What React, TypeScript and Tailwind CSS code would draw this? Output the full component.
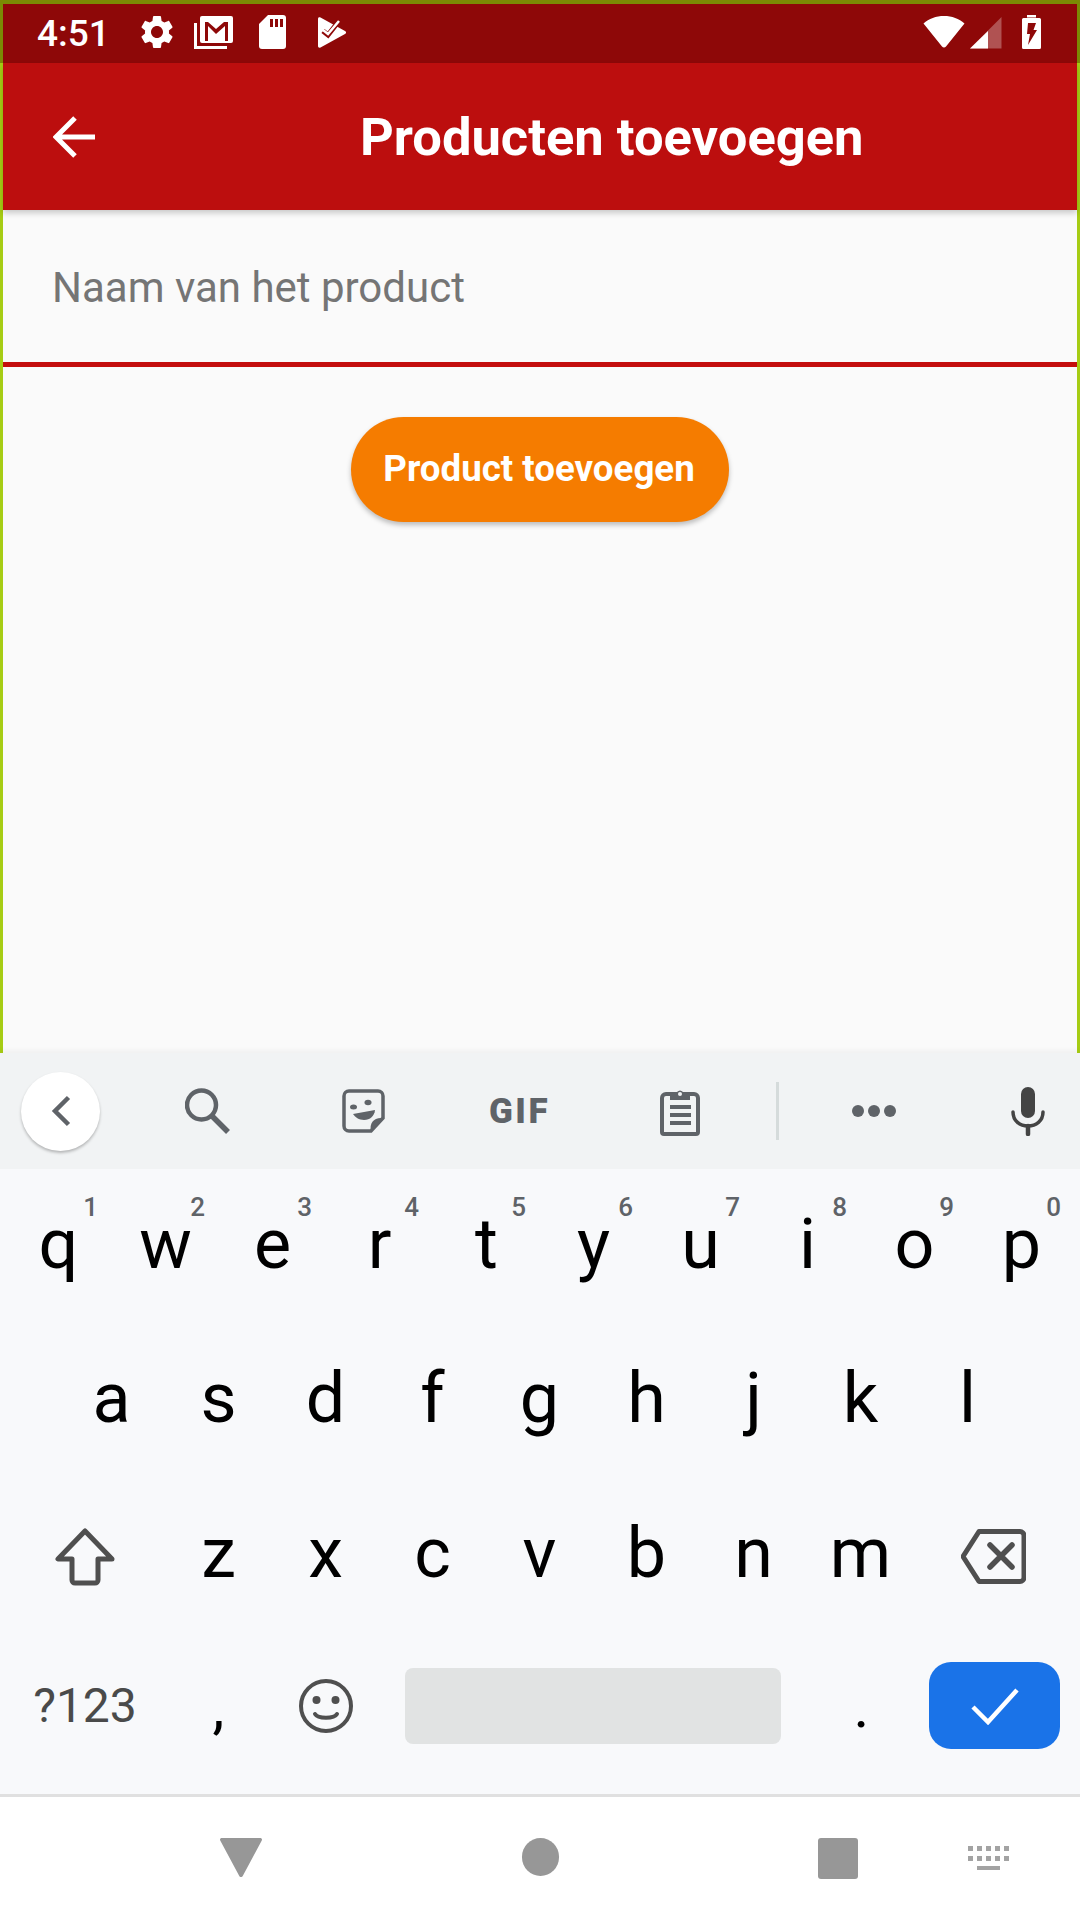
const ROW1 = [
  ["q", "1"], ["w", "2"], ["e", "3"], ["r", "4"], ["t", "5"],
  ["y", "6"], ["u", "7"], ["i", "8"], ["o", "9"], ["p", "0"],
];
const ROW2 = ["a", "s", "d", "f", "g", "h", "j", "k", "l"];
const ROW3 = ["z", "x", "c", "v", "b", "n", "m"];

const GEAR =
  "M19.14 12.94c.04-.3.06-.61.06-.94 0-.32-.02-.64-.07-.94l2.03-1.58c.18-.14.23-.41.12-.61l-1.92-3.32c-.12-.22-.37-.29-.59-.22l-2.39.96c-.5-.38-1.03-.7-1.62-.94l-.36-2.54c-.04-.24-.24-.41-.48-.41h-3.84c-.24 0-.43.17-.47.41l-.36 2.54c-.59.24-1.13.57-1.62.94l-2.39-.96c-.22-.08-.47 0-.59.22L2.74 8.87c-.12.21-.08.47.12.61l2.03 1.58c-.05.3-.09.63-.09.94s.02.64.07.94l-2.03 1.58c-.18.14-.23.41-.12.61l1.92 3.32c.12.22.37.29.59.22l2.39-.96c.5.38 1.03.7 1.62.94l.36 2.54c.05.24.24.41.48.41h3.84c.24 0 .44-.17.47-.41l.36-2.54c.59-.24 1.13-.56 1.62-.94l2.39.96c.22.08.47 0 .59-.22l1.92-3.32c.12-.22.07-.47-.12-.61l-2.01-1.58zM12 15.6c-1.98 0-3.6-1.62-3.6-3.6s1.62-3.6 3.6-3.6 3.6 1.62 3.6 3.6-1.62 3.6-3.6 3.6z";

function StatusBar() {
  return (
    <div className="h-[63px] shrink-0 bg-[#8e0808] border-t-4 border-x-[3px] border-[#7b8a04] flex items-center text-white">
      <span className="ml-[34px] -mt-[1px] w-[70px] text-[37px] leading-none font-medium">4:51</span>
      <svg className="ml-[30px] -mt-[3px]" width="40" height="40" viewBox="0 0 24 24" fill="#fff"><path d={GEAR} /></svg>
      <svg className="ml-[17px] -mt-[3px]" width="40" height="34" viewBox="0 0 40 34" fill="none">
        <path d="M1.5 8v24.5H33" stroke="#fff" strokeWidth="3" />
        <path d="M6 3a2 2 0 0 1 2-2h29a2 2 0 0 1 2 2v23a2 2 0 0 1-2 2H8a2 2 0 0 1-2-2z" fill="#fff" />
        <path d="M11 26V7h3l8 7 8-7h4v19h-3V11l-9 8-8-8v15z" fill="#8e0808" />
      </svg>
      <svg className="ml-[25px] -mt-[3px]" width="27" height="34" viewBox="0 0 27 34">
        <path d="M9 0h15a3 3 0 0 1 3 3v28a3 3 0 0 1-3 3H3a3 3 0 0 1-3-3V9z" fill="#fff" />
        <path d="M11 4h3v8h-3zM16 4h3v8h-3zM21 4h3v8h-3z" fill="#8e0808" />
      </svg>
      <svg className="ml-[32px] -mt-[3px]" width="28" height="31" viewBox="0 0 28 31">
        <path d="M0 2v27c0 1.500 1 2 2.500 1.500L27 17c1.500-1 1.500-2 0-3L2.500.5C1-.2 0 .5 0 2z" fill="#fff" />
        <path d="M5 14l5 4 11-14" fill="none" stroke="#8e0808" strokeWidth="5" />
        <path d="M5 13l5 4L21 4" fill="none" stroke="#fff" strokeWidth="2.500" />
      </svg>
      <svg className="ml-auto -mt-[3px]" width="42" height="32" viewBox="0 0 42 32">
        <path d="M21 0C13 0 6 2.500.5 7.500L19 30.500c1 1.300 3 1.300 4 0L41.500 7.500C36 2.500 29 0 21 0z" fill="#fff" />
      </svg>
      <svg className="ml-[5px] -mt-[1px]" width="32" height="32" viewBox="0 0 32 32">
        <path d="M31.500 0v31.500H0z" fill="#fff" fillOpacity="0.3" />
        <path d="M18 14v17.500H0z" fill="#fff" />
      </svg>
      <svg className="ml-[20px] mr-[36px] -mt-[3px]" width="19" height="34" viewBox="0 0 19 34">
        <path d="M5 2.500h9V0H5zM1.500 3h16A1.500 1.500 0 0 1 19 4.500v28a1.500 1.500 0 0 1-1.500 1.500h-16A1.500 1.500 0 0 1 0 32.500v-28A1.500 1.500 0 0 1 1.500 3z" fill="#fff" />
        <path d="M6 8h8l-2.500 7H15L6 30l2-11H5z" fill="#8e0808" />
      </svg>
    </div>
  );
}

function KeyLetter({ ch, sup }: { ch: string; sup?: string }) {
  return (
    <div className="relative w-[107px] h-full flex items-center justify-center text-[70px] leading-none text-black">
      <span className="-mt-[8px]">{ch}</span>
      {sup && (
        <span className="absolute right-[14px] top-[22px] text-[26px] leading-none font-medium text-[#5f6368]">
          {sup}
        </span>
      )}
    </div>
  );
}

function Suggestions() {
  return (
    <div className="h-[116px] shrink-0 bg-[#f1f3f4] flex items-center pl-[21px]">
      <div className="w-[79px] h-[79px] rounded-full bg-white shadow-[0_2px_3px_rgba(0,0,0,0.25)] flex items-center justify-center">
        <svg width="20" height="32" viewBox="0 0 20 32" fill="none">
          <path d="M17.500 2.500L4 16l13.500 13.500" stroke="#5f6368" strokeWidth="4.500" />
        </svg>
      </div>
      <svg className="ml-[85px]" width="45" height="46" viewBox="0 0 45 46" fill="none" stroke="#5f6368">
        <circle cx="16.500" cy="17" r="14.500" strokeWidth="4.500" />
        <path d="M27 28l16 16" strokeWidth="5.500" />
      </svg>
      <svg className="ml-[112px]" width="43" height="44" viewBox="0 0 43 44">
        <path d="M7 2h29a5 5 0 0 1 5 5v22L29 42H7a5 5 0 0 1-5-5V7a5 5 0 0 1 5-5z" fill="none" stroke="#5f6368" strokeWidth="3.500" />
        <path d="M41 29L29 42c-2-8 3-14 12-13z" fill="#5f6368" />
        <ellipse cx="11.500" cy="18" rx="3.500" ry="2.500" fill="#5f6368" />
        <ellipse cx="26" cy="13.500" rx="3.500" ry="2.800" fill="#5f6368" />
        <path d="M11 25l22-4c-.5 6-5 10-11 10-5 0-9-3-11-6z" fill="#5f6368" />
      </svg>
      <span className="ml-[104px] w-[61px] text-[35px] leading-none font-black tracking-[2.500px] text-[#5f6368]">
        GIF
      </span>
      <svg className="ml-[110px]" width="40" height="49" viewBox="0 0 40 49">
        <path d="M6 7h28a4 4 0 0 1 4 4v34a2 2 0 0 1-2 2H4a2 2 0 0 1-2-2V11a4 4 0 0 1 4-4z" fill="none" stroke="#5f6368" strokeWidth="4" />
        <path d="M10 13V6h6.500a3.700 3.700 0 0 1 7 0H30v7z" fill="#5f6368" />
        <circle cx="20" cy="7" r="2" fill="#f1f3f4" />
        <path d="M10 18h21v4H10zM10 26h21v4H10zM10 34h21v4H10z" fill="#5f6368" />
      </svg>
      <div className="ml-[76px] w-[3px] h-[58px] bg-[#d5dbdb]" />
      <div className="ml-[73px] w-[44px] flex justify-between">
        <div className="w-[12px] h-[12px] rounded-full bg-[#5f6368]" />
        <div className="w-[12px] h-[12px] rounded-full bg-[#5f6368]" />
        <div className="w-[12px] h-[12px] rounded-full bg-[#5f6368]" />
      </div>
      <svg className="ml-[115px]" width="34" height="49" viewBox="0 0 34 49">
        <rect x="10" y="0" width="14" height="31" rx="7" fill="#444" />
        <path d="M2 25c0 9 7 14 15 14s15-5 15-14" fill="none" stroke="#444" strokeWidth="3.500" strokeLinecap="round" />
        <path d="M17 39v8" stroke="#444" strokeWidth="4.500" strokeLinecap="round" />
      </svg>
    </div>
  );
}

function Keyboard() {
  return (
    <div className="h-[741px] shrink-0 relative z-10 flex flex-col shadow-[0_-3px_5px_rgba(0,0,0,0.04)]">
      <Suggestions />
      <div className="flex-1 bg-[#f8f9fb] flex flex-col pt-[3px]">
        <div className="h-[152px] flex pl-[5px]">
          {ROW1.map(([ch, sup]) => (
            <KeyLetter key={ch} ch={ch} sup={sup} />
          ))}
        </div>
        <div className="h-[155px] flex pl-[58px]">
          {ROW2.map((ch) => (
            <KeyLetter key={ch} ch={ch} />
          ))}
        </div>
        <div className="h-[155px] flex pl-[5px]">
          <div className="w-[160px] flex items-center justify-center">
            <svg width="60" height="58" viewBox="0 0 60 58" fill="none">
              <path d="M30 3L3 31h14v21a3 3 0 0 0 3 3h20a3 3 0 0 0 3-3V31h14z" stroke="#4f4f4f" strokeWidth="5" strokeLinejoin="round" />
            </svg>
          </div>
          {ROW3.map((ch) => (
            <KeyLetter key={ch} ch={ch} />
          ))}
          <div className="flex-1 flex items-center pl-[47px]">
            <svg width="65" height="55" viewBox="0 0 65 55" fill="none" stroke="#4f4f4f">
              <path d="M18 2.500h41a4 4 0 0 1 4 4v42a4 4 0 0 1-4 4H18L2 27.500z" strokeWidth="5" strokeLinejoin="round" />
              <path d="M29 16l22 22M51 16L29 38" strokeWidth="5.500" strokeLinecap="round" />
            </svg>
          </div>
        </div>
        <div className="h-[143px] flex pl-[5px] items-center">
          <div className="w-[160px] text-center text-[48px] leading-none text-[#4a4a4a]">?123</div>
          <div className="w-[107px] text-center text-[60px] leading-none text-black mt-[2px]">,</div>
          <div className="w-[107px] flex justify-center">
            <svg width="54" height="54" viewBox="0 0 54 54" fill="none">
              <circle cx="27" cy="27" r="25" stroke="#4f4f4f" strokeWidth="4" />
              <circle cx="17.500" cy="21" r="4" fill="#4f4f4f" />
              <circle cx="36.500" cy="21" r="4" fill="#4f4f4f" />
              <path d="M16 35c3 5 19 5 22 0" stroke="#4f4f4f" strokeWidth="4" strokeLinecap="round" />
            </svg>
          </div>
          <div className="ml-[26px] w-[376px] h-[76px] rounded-[8px] bg-[#e1e3e3]" />
          <div className="w-[148px] pl-[13px] text-center text-[60px] leading-none text-black mt-[2px]">.</div>
          <div className="w-[131px] h-[87px] rounded-[22px] bg-[#1a73e8] flex items-center justify-center">
            <svg width="48" height="38" viewBox="0 0 48 38" fill="none">
              <path d="M2 20l15 15L46 3" stroke="#fff" strokeWidth="4.500" />
            </svg>
          </div>
        </div>
      </div>
    </div>
  );
}

function NavBar() {
  return (
    <div className="h-[126px] shrink-0 bg-white border-t-[3px] border-[#e0e0e0] relative z-10 flex items-center">
      <svg className="ml-[220px] -mt-[3px]" width="42" height="39" viewBox="0 0 42 39">
        <path d="M2 0h38c2 0 2.500 1.500 1.500 3L23 37.500c-1 2-3 2-4 0L.5 3C-.5 1.500 0 0 2 0z" fill="#979797" />
      </svg>
      <div className="ml-[260px] -mt-[3px] w-[37px] h-[38px] rounded-full bg-[#979797]" />
      <div className="ml-[259px] -mt-[1px] w-[40px] h-[41px] rounded-[3px] bg-[#979797]" />
      <svg className="ml-[110px] -mt-[1px]" width="41" height="24" viewBox="0 0 41 24" fill="#a3a3a3">
        <path d="M0 0h5v5H0zM9 0h5v5H9zM18 0h5v5h-5zM27 0h5v5h-5zM36 0h5v5h-5zM0 10h5v5H0zM9 10h5v5H9zM18 10h5v5h-5zM27 10h5v5h-5zM36 10h5v5h-5zM9 20h23v4H9z" />
      </svg>
    </div>
  );
}

export default function App() {
  return (
    <div className="w-[1080px] h-[1920px] flex flex-col overflow-hidden bg-white font-['Roboto',sans-serif]">
      <div className="h-[1053px] shrink-0 flex flex-col">
        <StatusBar />
        <div className="flex-1 flex flex-col min-h-0 border-x-[3px] border-[#a6cc14] bg-[#fafafa]">
          <header className="h-[147px] shrink-0 bg-[#bc0e0e] flex items-center pl-[50px] text-white shadow-[0_3px_6px_rgba(0,0,0,0.2)] relative">
            <svg width="42" height="42" viewBox="0 0 42 42" fill="none">
              <path d="M42 21H4M22 2L3 21l19 19" stroke="#fff" strokeWidth="5" />
            </svg>
            <h1 className="ml-[265px] mt-[1px] text-[52.500px] leading-none font-bold whitespace-nowrap">Producten toevoegen</h1>
          </header>
          <div className="h-[157px] shrink-0 flex items-center pl-[49px] pt-[4px] border-b-[5px] border-[#c40e0e]">
            <span className="text-[42px] leading-none text-[#757575]">Naam van het product</span>
          </div>
          <div className="flex justify-center pt-[50px]">
            <button
              type="button"
              className="w-[378px] h-[105px] rounded-full bg-[#f57c00] text-white text-[36.700px] leading-none font-bold shadow-[0_3px_5px_rgba(0,0,0,0.25)] pr-[2px]"
            >
              Product toevoegen
            </button>
          </div>
        </div>
      </div>
      <Keyboard />
      <NavBar />
    </div>
  );
}
